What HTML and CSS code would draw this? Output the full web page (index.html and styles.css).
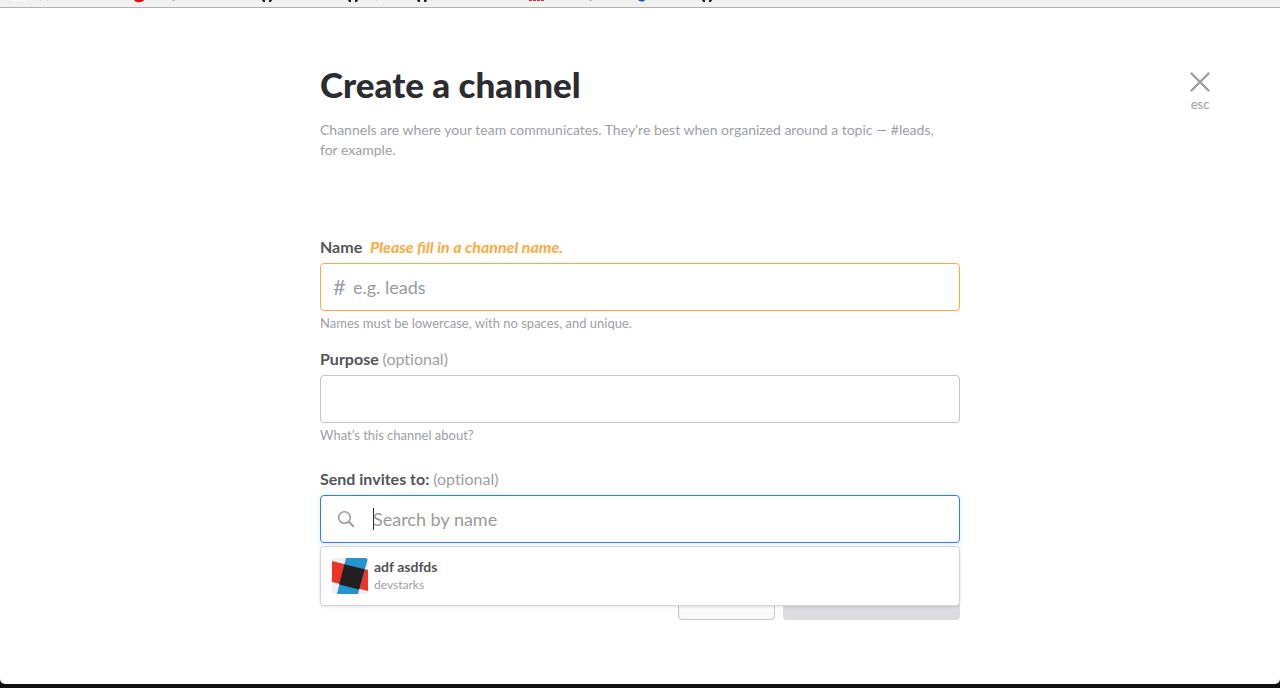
FILE: index.html
```html
<!DOCTYPE html>
<html lang="en">
<head>
<meta charset="utf-8">
<title>Create a channel</title>
<link rel="stylesheet" href="styles.css">
</head>
<body>
<div class="window">
  <div class="bookmarks" aria-hidden="true">
    <svg class="bookmark-icons" width="720" height="7" viewBox="0 0 720 7">
      <path d="M13 0h3v1h-3zM18 0h3v1h-3zM23 0h3v1h-3z" fill="#fff"/>
      <path d="M40 0h1v1h-1zM47 0h1v1h-1zM376 0h1v1h-1z" fill="#ccc"/>
      <path d="M134 0h10q-1 2-5 2t-5-2z" fill="#f00"/>
      <path d="M172 0h3v1h-3zM589 0h3v1h-3z" fill="#bbb"/>
      <g fill="#222">
        <path d="M262 0h3v2h-2zM269 0h3l-1 2h-2z"/>
        <path d="M348 0h3v2h-2zM355 0h3l-1 2h-2z"/>
        <path d="M417 0h3v2h-2zM424 0h3l-1 2h-2z"/>
        <path d="M702 0h3v2h-2zM709 0h3l-1 2h-2z"/>
      </g>
      <path d="M529 0h3v1h-3zM533 0h3v1h-3zM537 0h3v1h-3zM541 0h3v1h-3z" fill="#d42a35"/>
      <path d="M638 0h7q-1 2-3.500 1.500t-3.500-1.500z" fill="#0b5cc4"/>
    </svg>
  </div>
  <main class="modal">
    <button class="close" type="button">
      <svg width="20" height="20" viewBox="0 0 20 20" fill="none" stroke="#9e9ea6" stroke-width="2.400" stroke-linecap="round" aria-hidden="true"><path d="M1.500 1.500l17 17M18.500 1.500l-17 17"/></svg>
      <span>esc</span>
    </button>
    <form class="panel">
      <h1 class="title">Create a channel</h1>
      <p class="intro">Channels are where your team communicates. They’re best when organized around a topic — #leads, for example.</p>

      <div class="field">
        <label class="label" for="name">Name <em class="warning">Please fill in a channel name.</em></label>
        <div class="control control-warning">
          <span class="prefix">#</span>
          <input class="input" id="name" type="text" placeholder="e.g. leads">
        </div>
        <p class="hint">Names must be lowercase, with no spaces, and unique.</p>
      </div>

      <div class="field field-purpose">
        <label class="label" for="purpose">Purpose <span class="optional">(optional)</span></label>
        <div class="control">
          <input class="input" id="purpose" type="text">
        </div>
        <p class="hint">What’s this channel about?</p>
      </div>

      <div class="field field-invites">
        <label class="label" for="invites">Send invites to: <span class="optional">(optional)</span></label>
        <div class="control control-focus">
          <svg class="search-icon" width="18" height="18" viewBox="0 0 18 18" fill="none" stroke="#9e9ea6" stroke-linecap="round" aria-hidden="true"><circle cx="7.500" cy="7.500" r="5.800" stroke-width="1.600"/><path d="M11.800 11.800l4.400 4.400" stroke-width="2"/></svg>
          <span class="caret"></span>
          <input class="input" id="invites" type="text" placeholder="Search by name">
        </div>
        <div class="suggestions">
          <button class="member" type="button">
            <svg class="avatar" width="36" height="36" viewBox="0 0 36 36" aria-hidden="true">
              <path d="M0 0h36v36H0z" fill="#eef0f6"/>
              <path d="M0 3l36 9v21L0 24z" fill="#ee3424"/>
              <path d="M14 0h22L26 36H5z" fill="#2593d1"/>
              <path d="M12.400 6.200l20.300 5-5.600 20.300-19.900-5z" fill="#231f20"/>
            </svg>
            <span class="member-text">
              <strong class="member-name">adf asdfds</strong>
              <span class="member-handle">devstarks</span>
            </span>
          </button>
        </div>
      </div>

      <div class="actions">
        <button class="button button-cancel" type="button" aria-label="Cancel"></button>
        <button class="button button-create" type="submit" aria-label="Create Channel" disabled></button>
      </div>
    </form>
  </main>
</div>
</body>
</html>
```
FILE: styles.css
```css
* {
  box-sizing: border-box;
}

body {
  margin: 0;
  background: #110f12;
  color: #555459;
  font-family: Lato, sans-serif;
  font-size: 16px;
}

h1,
p {
  margin: 0;
}

button,
input {
  font: inherit;
}

.window {
  display: flex;
  flex-direction: column;
  min-height: calc(100vh - 4px);
  background: #fff;
  border-radius: 0 0 5px 5px;
}

.bookmarks {
  height: 8px;
  background: #f1f1f1;
  border-bottom: 1px solid #b1b1b1;
}

.bookmark-icons {
  display: block;
}

.modal {
  position: relative;
  flex: 1;
  padding: 56px 24px;
}

.close {
  position: absolute;
  top: 64px;
  right: 70px;
  display: flex;
  flex-direction: column;
  align-items: center;
  gap: 4px;
  width: 20px;
  padding: 0;
  border: 0;
  background: none;
  color: #9e9ea6;
  font-size: 13px;
  line-height: 16px;
}

.panel {
  max-width: 640px;
  margin: 0 auto;
}

.title {
  color: #2c2d30;
  font-size: 35px;
  font-weight: 900;
  line-height: 40px;
}

.intro {
  max-width: 630px;
  margin: 16px 0 76px;
  color: #9e9ea6;
  font-size: 14px;
  line-height: 20px;
}

.field {
  position: relative;
}

.field-purpose {
  margin-top: 15px;
}

.field-invites {
  margin-top: 23px;
}

.label {
  display: block;
  margin-bottom: 5px;
  font-weight: 700;
  line-height: 22px;
}

.warning {
  margin-left: 4px;
  color: #ffa940;
}

.optional {
  color: #9e9ea6;
  font-weight: 400;
  font-variant-ligatures: none;
}

.control {
  position: relative;
  display: flex;
  align-items: center;
  height: 48px;
  padding: 0 12px;
  border: 1px solid #c5c5c8;
  border-radius: 4px;
}

.control-warning {
  border-color: #ffa940;
}

.control-focus {
  padding-left: 16px;
  border-color: #2780f8;
  box-shadow: 0 0 7px rgba(39, 128, 248, 0.15);
}

.prefix {
  width: 20px;
  color: #9e9ea6;
  font-size: 22px;
  line-height: 24px;
}

.input {
  flex: 1;
  min-width: 0;
  height: 100%;
  padding: 0;
  border: 0;
  outline: 0;
  background: none;
  color: #555459;
  font-size: 18px;
}

.input::placeholder {
  color: #9a9a9a;
  opacity: 1;
}

.search-icon {
  margin-right: 18px;
}

.caret {
  width: 1px;
  height: 22px;
  margin-right: -1px;
  background: #2c2d30;
}

.hint {
  margin-top: 2px;
  color: #9e9ea6;
  font-size: 13px;
  line-height: 20px;
}

.suggestions {
  position: absolute;
  z-index: 1;
  top: calc(100% + 3px);
  left: 0;
  right: 0;
  border: 1px solid #d5d5d7;
  border-radius: 4px;
  background: #fff;
  box-shadow: 0 1px 3px rgba(0, 0, 0, 0.12);
}

.member {
  display: flex;
  align-items: center;
  gap: 6px;
  width: 100%;
  padding: 11px;
  border: 0;
  background: none;
  text-align: left;
}

.avatar {
  border-radius: 3px;
}

.member-text {
  display: flex;
  flex-direction: column;
}

.member-name {
  color: #555459;
  font-size: 14px;
  line-height: 18px;
}

.member-handle {
  color: #9e9ea6;
  font-size: 12px;
  line-height: 18px;
}

.actions {
  display: flex;
  justify-content: flex-end;
  gap: 8px;
  margin-top: 29px;
}

.button {
  height: 48px;
  border-radius: 4px;
}

.button-cancel {
  width: 97px;
  border: 1px solid #c5c5c8;
  background: #fafafa;
}

.button-create {
  width: 177px;
  border: 0;
  background: #dcdce0;
}
```
